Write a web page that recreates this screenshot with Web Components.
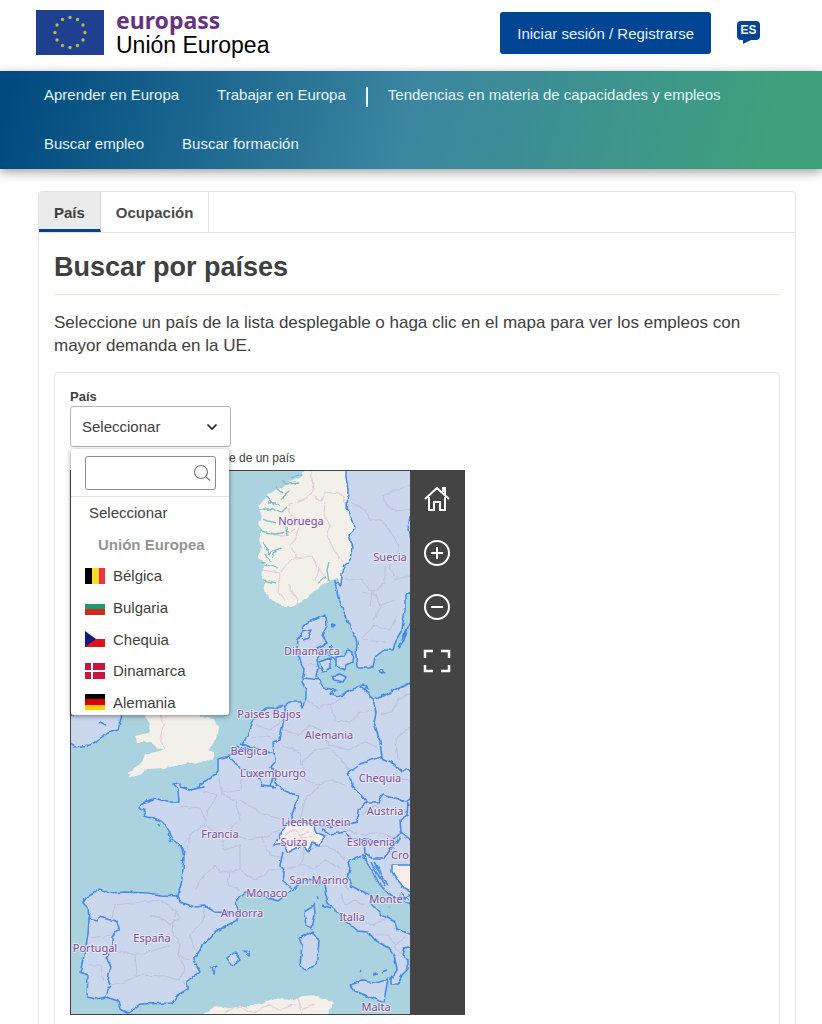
<!DOCTYPE html>
<html lang="es">
<head>
<meta charset="utf-8">
<meta name="viewport" content="width=device-width, initial-scale=1">
<title>Europass</title>
<style>
body{margin:0;background:#fff;color:#404040;font-family:"Liberation Sans",Arial,sans-serif}
html{scrollbar-width:none}
</style>
</head>
<body>
<site-header></site-header>
<site-nav></site-nav>
<main>
<tab-card>
  <search-panel>
    <country-picker slot="picker"></country-picker>
    <europe-map slot="map"></europe-map>
  </search-panel>
</tab-card>
</main>
<script>
const define = (name, html) => customElements.define(name, class extends HTMLElement {
  constructor() {
    super();
    const t = document.createElement('template');
    t.innerHTML = html;
    this.attachShadow({mode: 'open'}).append(t.content.cloneNode(true));
  }
});

let stars = '';
for (let i = 0; i < 12; i++) {
  const a = i * Math.PI / 6;
  stars += `<circle cx="${(34 + 15 * Math.sin(a)).toFixed(1)}" cy="${(22.5 - 15 * Math.cos(a)).toFixed(1)}" r="1.7"/>`;
}

define('site-header', `
<style>
:host{display:block;background:#fff}
header{display:flex;align-items:flex-start;height:71px;box-sizing:border-box;padding:10px 62px 0 36px}
.brand{display:flex;gap:12px;text-decoration:none;color:#000;flex:1}
.brand svg{display:block}
.name{display:flex;flex-direction:column;font-size:23px;line-height:26px}
.name b{font:bold 23px/20px "Noto Sans",sans-serif;color:#663383;margin-bottom:2px}
.login{margin-top:2px;height:42px;padding:0 17px;border:0;border-radius:3px;background:#004494;color:#e8f2ff;font:15px "Liberation Sans",Arial,sans-serif}
.lang{margin:11px 0 0 26px;padding:0;border:0;background:none;display:grid;color:#fff;font:bold 12px/18px "Liberation Sans",Arial,sans-serif;width:23px;height:23px}
.lang svg,.lang span{grid-area:1/1}
</style>
<header>
  <a class="brand" href="#">
    <svg width="68" height="45" viewBox="0 0 68 45" aria-hidden="true"><rect width="68" height="45" fill="#1f3f91"/><g fill="#b5b945">${stars}</g></svg>
    <span class="name"><b>europass</b><span>Unión Europea</span></span>
  </a>
  <button class="login">Iniciar sesión / Registrarse</button>
  <button class="lang"><svg width="23" height="23" viewBox="0 0 23 23" aria-hidden="true"><path d="M4 0h15q4 0 4 4v11q0 4-4 4h-5l-8 4v-4H4q-4 0-4-4V4q0-4 4-4z" fill="#004494"/></svg><span>ES</span></button>
</header>`);

define('site-nav', `
<style>
:host{display:block;position:relative;background:linear-gradient(105deg,#004a80 2%,#3b86a0 50%,#3fa07c 93%);box-shadow:0 3px 10px rgba(0,0,0,.38)}
nav{display:flex;flex-wrap:wrap;padding:0 25px}
a{display:flex;align-items:center;height:49px;padding:0 19px 2px;box-sizing:border-box;color:#e3f4fa;text-decoration:none;font-size:15px}
.sep{width:2px;height:20px;margin:16px 1px 0;background:#e3f4fa}
</style>
<nav>
  <a href="#">Aprender en Europa</a><a href="#">Trabajar en Europa</a><span class="sep"></span>
  <a href="#">Tendencias en materia de capacidades y empleos</a>
  <a href="#">Buscar empleo</a><a href="#">Buscar formación</a>
</nav>`);

define('tab-card', `
<style>
:host{display:block;margin:22px 26px 0 38px;border:1px solid #e3e3e3;border-radius:4px}
.tabs{display:flex;border-bottom:1px solid #e3e3e3;height:40px}
button{box-sizing:border-box;border:0;border-right:1px solid #e3e3e3;background:#fff;color:#4a4a4a;font:bold 15px "Liberation Sans",Arial,sans-serif;padding:0 15px}
.on{background:#ebebeb;border-bottom:3px solid #004494;padding:3px 15px 0;color:#404040;border-right-color:#d4d4d4}
</style>
<div class="tabs" role="tablist"><button class="on" role="tab">País</button><button role="tab">Ocupación</button></div>
<slot></slot>`);

define('search-panel', `
<style>
:host{display:block;padding:0 15px 16px}
h1{margin:0;padding:18px 0 11px;font-size:27px;line-height:32px;color:#404040;border-bottom:1px solid #ebebcd}
p{margin:16px 0 15px;font-size:17px;line-height:23px}
section{border:1px solid #e3e3e3;border-radius:4px;padding:15px}
.note{padding-left:159px;font-size:12px;line-height:16px;margin:3px 0 4px}
</style>
<h1>Buscar por países</h1>
<p>Seleccione un país de la lista desplegable o haga clic en el mapa para ver los empleos con mayor demanda en la UE.</p>
<section>
  <slot name="picker"></slot>
  <div class="note">e de un país</div>
  <slot name="map"></slot>
</section>`);

const flags = {
  'Bélgica': '<path fill="#000" d="M0 0h7v16H0z"/><path fill="#fbd928" d="M7 0h7v16H7z"/><path fill="#ef3340" d="M14 0h6v16h-6z"/>',
  'Bulgaria': '<path fill="#f6f6f6" d="M0 1h20v4H0z"/><path fill="#1b9a72" d="M0 5h20v5H0z"/><path fill="#d02b1c" d="M0 10h20v6H0z"/>',
  'Chequia': '<path fill="#fafafa" d="M0 0h20v8H0z"/><path fill="#d7141a" d="M0 8h20v8H0z"/><path fill="#12197a" d="M0 0l11 8-11 8z"/>',
  'Dinamarca': '<path fill="#c8163c" d="M0 0h20v16H0z"/><path fill="#fff" d="M6 0h2v16H6zM0 7h20v2H0z"/>',
  'Alemania': '<path fill="#000" d="M0 0h20v5H0z"/><path fill="#dd0000" d="M0 5h20v6H0z"/><path fill="#ffce00" d="M0 11h20v5H0z"/>'
};
define('country-picker', `
<style>
:host{display:block;position:relative}
label{display:block;font-weight:bold;font-size:13px;line-height:18px}
.box{display:grid;width:161px;align-items:center}
select,.box svg{grid-area:1/1}
select{appearance:none;width:161px;height:41px;border:1px solid #b4b4b4;border-radius:3px;background:#fff;color:#404040;font:15px "Liberation Sans",Arial,sans-serif;padding:0 11px}
.box svg{justify-self:end;margin-right:13px;pointer-events:none}
.menu{position:absolute;z-index:3;left:1px;top:61px;width:158px;box-sizing:border-box;background:#fff;border-radius:3px;box-shadow:0 1px 5px rgba(0,0,0,.45);overflow:hidden}
.find{display:flex;align-items:center;justify-content:flex-end;padding:7px 13px 6px 14px;border-bottom:1px solid #e0e0e0}
input{width:100%;height:34px;box-sizing:border-box;border:1px solid #8c8c8c;border-radius:3px;background:#fff;padding:0 28px 0 8px;font:15px "Liberation Sans",Arial,sans-serif}
.find svg{position:absolute;right:18px}
.list{height:218px;overflow:hidden}
ul{list-style:none;margin:0;padding:0;display:grid;grid-template-rows:repeat(7,1fr);height:221px;font-size:15px}
li{display:flex;align-items:center;gap:8px;padding:0 14px}
.all{padding-left:18px}
.group{font-weight:bold;color:#949494;padding-left:27px}
</style>
<label for="c">País</label>
<div class="box"><select id="c"><option>Seleccionar</option></select>
<svg width="12" height="8" viewBox="0 0 12 8" fill="none" stroke="#222" stroke-width="1.6"><path d="M1.5 1.5L6 6l4.500-4.500"/></svg></div>
<div class="menu">
  <div class="find"><input aria-label="Buscar" type="text"><svg width="18" height="18" viewBox="0 0 18 18" fill="none" stroke="#777" stroke-width="1.200"><circle cx="8" cy="8" r="6.500"/><path d="M13 13l4 3.500"/></svg></div>
  <div class="list"><ul role="listbox">
    <li class="all" role="option">Seleccionar</li>
    <li class="group">Unión Europea</li>
    ${Object.entries(flags).map(([n, f]) => `<li role="option"><svg width="20" height="16" viewBox="0 0 20 16" aria-hidden="true">${f}</svg>${n}</li>`).join('')}
  </ul></div>
</div>`);

const labels = [
  ['Noruega',301,525],['Suecia',390,561],['Dinamarca',312,655],['Paises Bajos',269,718],['Alemania',329,739],
  ['Bélgica',249,755],['Luxemburgo',273,777],['Chequia',380,782],['Austria',385,815],['Liechtenstein',316,826],
  ['Francia',220,838],['Suiza',294,846],['Eslovenia',371,846],['San Marino',319,884],['Mónaco',267,897],
  ['Andorra',242,917],['Italia',352,921],['España',152,942],['Portugal',95,952],['Malta',376,1011],
  ['Cro',400,859],['Monte',386,903]
].map(([t, x, y]) => `<text x="${x}" y="${y}">${t}</text>`).join('');

define('europe-map', `
<style>
:host{display:flex;box-sizing:border-box;width:395px;max-width:100%;height:545px;border:1px solid #444;overflow:hidden}
.sea{flex:1;min-width:0;height:543px;display:block;background:#aad3df}
.tools{flex:none;width:54px;background:#444;display:flex;flex-direction:column;align-items:center;padding-top:14px;gap:26px;box-sizing:border-box}
button{border:0;background:none;padding:0;width:28px;height:28px}
button svg{display:block}
text{font:11px "Noto Sans",sans-serif;fill:#75509b;text-anchor:middle;stroke:#f4ecf8;stroke-opacity:.75;stroke-width:2;paint-order:stroke}
.land{fill:#f3efe9}
.eu{fill:#cad7ed;stroke:#4288ee;stroke-width:1.500;stroke-linejoin:round}
.line{fill:none;stroke:#4288ee;stroke-width:1.500;stroke-linejoin:round}
.reg{fill:none;stroke:#bdb9dc;stroke-width:1.100;opacity:.8}
.county{fill:none;stroke:#e2cbdb;stroke-width:1.100}
.fjord{fill:none;stroke:#79bfc9;stroke-width:1.300}
</style>
<svg class="sea" viewBox="71 471 339 543" preserveAspectRatio="xMinYMin slice" role="img" aria-label="Mapa de Europa">
<defs><filter id="r" x="0" y="0" width="1" height="1" filterUnits="objectBoundingBox"><feTurbulence type="fractalNoise" baseFrequency=".14" numOctaves="2" seed="4"/><feDisplacementMap in="SourceGraphic" scale="4" xChannelSelector="R" yChannelSelector="G"/></filter></defs>
<g filter="url(#r)">
<rect x="60" y="460" width="360" height="570" fill="#aad3df"/>
<path class="land" d="M308 465L300 478 290 482 283 487 275 490 266 497 259 506 261 515 258 524 262 530 259 540 262 548 258 556 264 566 261 575 264 583 266 594 274 602 285 607 292 607 303 601 313 592 322 585 331 580 338 578 341 585 342 575 345 565 351 560 353 548 349 535 355 528 352 518 347 508 348 490 346 465z"/>
<path class="county" d="M310 470L314 489 307 498 290 504 288 512 300 524 295 540 290 545 297 558 312 556 317 567 328 580M314 496L321 501 325 492 340 494 347 504M325 502L324 515 330 525 327 535 334 550 342 562M266 534L285 536 295 530M280 573L290 560 297 557M280 573L278 592 285 601M288 585L298 603M318 568L315 580M262 570L280 573"/>
<path class="fjord" d="M302 474L291 478M300 483L286 484 282 480M290 490L280 499M283 493L276 487M260 509L272 509 282 512 287 507M262 519L276 523M260 531L276 534 288 532M286 527L287 536M263 542L270 554 275 550 282 548M276 550L272 559M261 563L277 568M263 580L276 583M264 553L270 562M329 581L327 570 329 562M326 577L318 582M268 503L276 503 281 506M267 497L274 505"/>
<path class="land" d="M140 705L146 716 150 725 148 733 135 736 137 742 150 742 158 748 163 750 145 755 140 765 128 773 129 777 137 776 148 769 165 768 190 763 205 762 214 757 214 752 208 750 216 740 218 728 214 719 200 717 200 700z"/>
<path class="county" d="M159 710L163 725 160 740 165 748"/>
<path class="land" d="M195 1020L215 1006 230 1008 250 1006 262 1003 275 998 290 1000 303 996 318 995 321 999 334 1002 325 1020z"/>
<path class="county" d="M225 1012L240 1008 255 1013 268 1004 280 1010 298 1003 302 1014M298 998L302 1010 315 1004"/>
<path class="eu" d="M346 460L346 478 348 490 347 508 352 518 355 528 349 535 353 548 351 560 345 565 342 575 341 585 335 582 338 597 343 610 350 625 355 635 357 643 356 655 357 667 373 667 375 657 384 650 393 650 396 640 402 630 405 610 405 595 425 590V460z"/>
<path class="reg" d="M352 503L365 510 370 520 380 520 390 530 398 545M382 495L411 485M383 495L385 505 397 511 411 509M345 580L362 580 372 592 385 583 385 565M362 592L375 595 382 606 373 620M372 592L370 607M395 600L380 606M362 638L375 625 390 630 397 615M390 565L395 580 411 575M363 640L385 642M398 545L398 556"/>
<path class="eu" d="M425 676L395 690 378 698 373 699 366 692 360 686 350 690 342 695 337 697 331 694 336 690 323 688 320 680 316 676 318 668 316 660 320 654 317 648 327 643 322 635 327 626 326 615 311 621 302 625 303 632 298 640 297 650 300 660 304 670 302 682 306 690 306 698 302 708 300 702 290 702 285 706 275 708 266 708 258 714 253 722 250 730 245 740 241 746 243 749 236 752 229 756 218 759 218 770 212 777 200 784 199 788 204 787 190 790 180 787 180 783 173 784 178 790 179 802 167 802 155 798 140 804 139 808 146 811 143 816 152 818 165 824 169 831 173 840 181 846 184 858 182 880 178 896 160 895 147 893 125 892 110 893 100 889 94 893 86 898 83 903 88 908 89 918 88 935 84 955 80 973 88 976 87 997 96 999 106 997 118 1001 120 1008 128 1013 140 1004 172 1003 180 993 187 989 187 982 200 972 193 960 205 943 215 932 237 920 238 910 236 902 245 893 265 897 278 901 292 890 305 879 315 880 324 886 328 903 335 910 345 920 358 931 368 932 375 940 390 949 394 955 397 970 391 979 391 984 398 984 402 975 408 969 408 960 402 956 404 948 425 944V940L397 929 395 922 382 915 372 905 370 895 351 886 348 878 350 868 348 862 354 858 363 855 367 862 373 872 380 885 390 895 425 912z"/>
<g class="reg">
<path d="M307 700L318 708 330 704 345 697M330 704L335 720 350 722 360 712 374 710M280 730L300 735 310 725 320 730 330 745 350 750 365 742 378 748M315 750L330 748 345 765 350 770M315 750L303 762 305 780 320 785 330 780 345 785M300 820L305 800 320 785M282 745L300 752 302 765M255 725L270 730 280 722M252 738L268 736 280 742"/>
<path d="M218 775L222 795 235 800 240 820 230 830 245 840 262 838 280 830M200 790L218 795 208 810 205 825 190 835 188 850M180 806L200 808 205 820M222 793L240 790 242 770 260 775M240 800L265 815 285 820M205 825L222 835 225 850 240 845 240 870 220 872 215 865 205 875 195 890M240 870L255 880 270 870 285 868M262 838L270 855 285 858M190 835L185 842M230 870L228 885 240 890"/>
<path d="M115 905L140 902 160 900 175 910 180 918 170 925 165 920 150 915M115 905L112 918M175 910L172 930 180 945 178 955 190 960M115 950L135 955 155 950 170 945M135 955L137 975 125 982 110 985M137 975L165 976 178 980 187 985M178 980L185 970 178 955M205 905L203 920 190 935 195 950M90 938L112 935M88 965L100 965 104 980M115 920L120 930"/>
<path d="M288 870L300 865 315 868 325 860 340 868M300 865L305 850 320 845 335 850 345 860M325 882L340 880 350 890M340 893L345 905 355 900 365 905M360 915L370 925 385 920M375 935L388 935 395 945 405 938M395 945L400 955M398 760L396 740 405 730 411 728M380 715L392 712 398 700 411 692M362 815L375 805 385 815M345 828L360 835 380 832 395 838M375 775L385 780 397 775 411 782M325 640L312 650M308 665L316 664M303 642L312 640"/>
</g>
<g class="line">
<path d="M304 678L320 680M285 706L285 715 282 728 280 740 273 742 274 752 275 762 271 767 276 775 275 783 285 791 298 796 291 818 292 822"/>
<path d="M243 749L255 748 268 752 274 754M229 756L236 764 245 770 258 777 262 785 270 786 273 777 276 779M262 785L270 786 276 787"/>
<path d="M373 699L376 712 374 722 380 742 382 758 377 758 360 764 348 772 352 785 367 802 358 810 357 822 345 825 325 827 315 824 292 822M382 758L394 764 402 772 406 768 411 771M367 802L378 802 383 795 398 799 406 802 411 798M408 802L407 815 400 820 401 832 396 838 380 842 365 840 350 839 347 832 330 834 322 829M401 832L411 840M364 840L365 855M365 855L372 858 384 858 390 850 398 842 401 836M283 852L280 865 284 872 283 882 292 888"/>
<path d="M178 896L180 902 195 907 205 906 215 912 235 913M89 918L96 920 99 917 116 921 119 929 112 937 112 948 108 956 106 958 111 966 108 980 111 985 105 997"/>
<path d="M410 540L408 530 410 515"/>
</g>
<path class="eu" style="fill:#f6eeea" d="M287 823L280 835 274 846 282 844 288 852 296 848 303 845 308 852 312 842 320 845 325 836 316 832 313 824 300 822z"/>
<path class="county" d="M285 836L295 828 300 836 310 830M300 836L305 842M295 845L300 837 315 838"/>
<path class="eu" style="fill:#f6eeea" d="M425 865L392 865 392 872 396 878 405 889 425 900z"/>
<path class="eu" d="M60 706H124L118 730 108 733 90 745 74 747 60 738zM319 662L330 658 330 668 323 672zM336 657L344 656 348 650 353 652 352 662 346 665 345 670 336 666zM332 677L340 674 346 677 343 682 335 680zM360 688L363 684 367 689zM379 670L382 669 384 673 380 672zM410 622L399 648 404 641zM314 903L315 915 312 928 306 925 304 912 312 907zM299 938L304 936 312 931 319 942 316 965 306 970 300 965 302 945zM350 985L362 981 375 983 388 979 385 995 384 1003 370 997 355 991zM227 958L235 952 240 960 234 965 230 963zM243 951L250 952 249 956zM212 968L217 966 214 973zM332 624L335 625 333 627z"/>
<path class="line" d="M371 862L376 872 385 886M374 862L378 868 381 876 388 886M379 871L375 866M398 896L405 899 411 894M400 893L410 900M303 632L312 630 308 638 302 640M324 655L332 649 330 645M328 654L335 660M236 746L249 751 255 746M240 743L249 747M157 824L159 826M168 833L171 842M181 845L185 853 182 860M389 905L390 907M373 975L378 974M382 972L387 970M322 905L331 908M318 895L319 898M360 971L361 972M71 716L78 706M100 722L106 725"/>
</g>
<g>${labels}</g>
</svg>
<div class="tools">
<button aria-label="Inicio"><svg width="28" height="28" viewBox="0 0 28 28" fill="none" stroke="#fff" stroke-width="2"><path d="M2 14L14 3l12 11M6 12v13h5v-8h6v8h5V12M20 7V3h2v7"/></svg></button>
<button aria-label="Acercar"><svg width="28" height="28" viewBox="0 0 28 28" fill="none" stroke="#fff" stroke-width="2"><circle cx="14" cy="14" r="12"/><path d="M14 8v12M8 14h12"/></svg></button>
<button aria-label="Alejar"><svg width="28" height="28" viewBox="0 0 28 28" fill="none" stroke="#fff" stroke-width="2"><circle cx="14" cy="14" r="12"/><path d="M8 14h12"/></svg></button>
<button aria-label="Pantalla completa"><svg width="28" height="28" viewBox="0 0 28 28" fill="none" stroke="#fff" stroke-width="2.500"><path d="M2 11V4h8M18 4h8v7M26 18v6h-8M10 24H2v-6"/></svg></button>
</div>`);
</script>
</body>
</html>
